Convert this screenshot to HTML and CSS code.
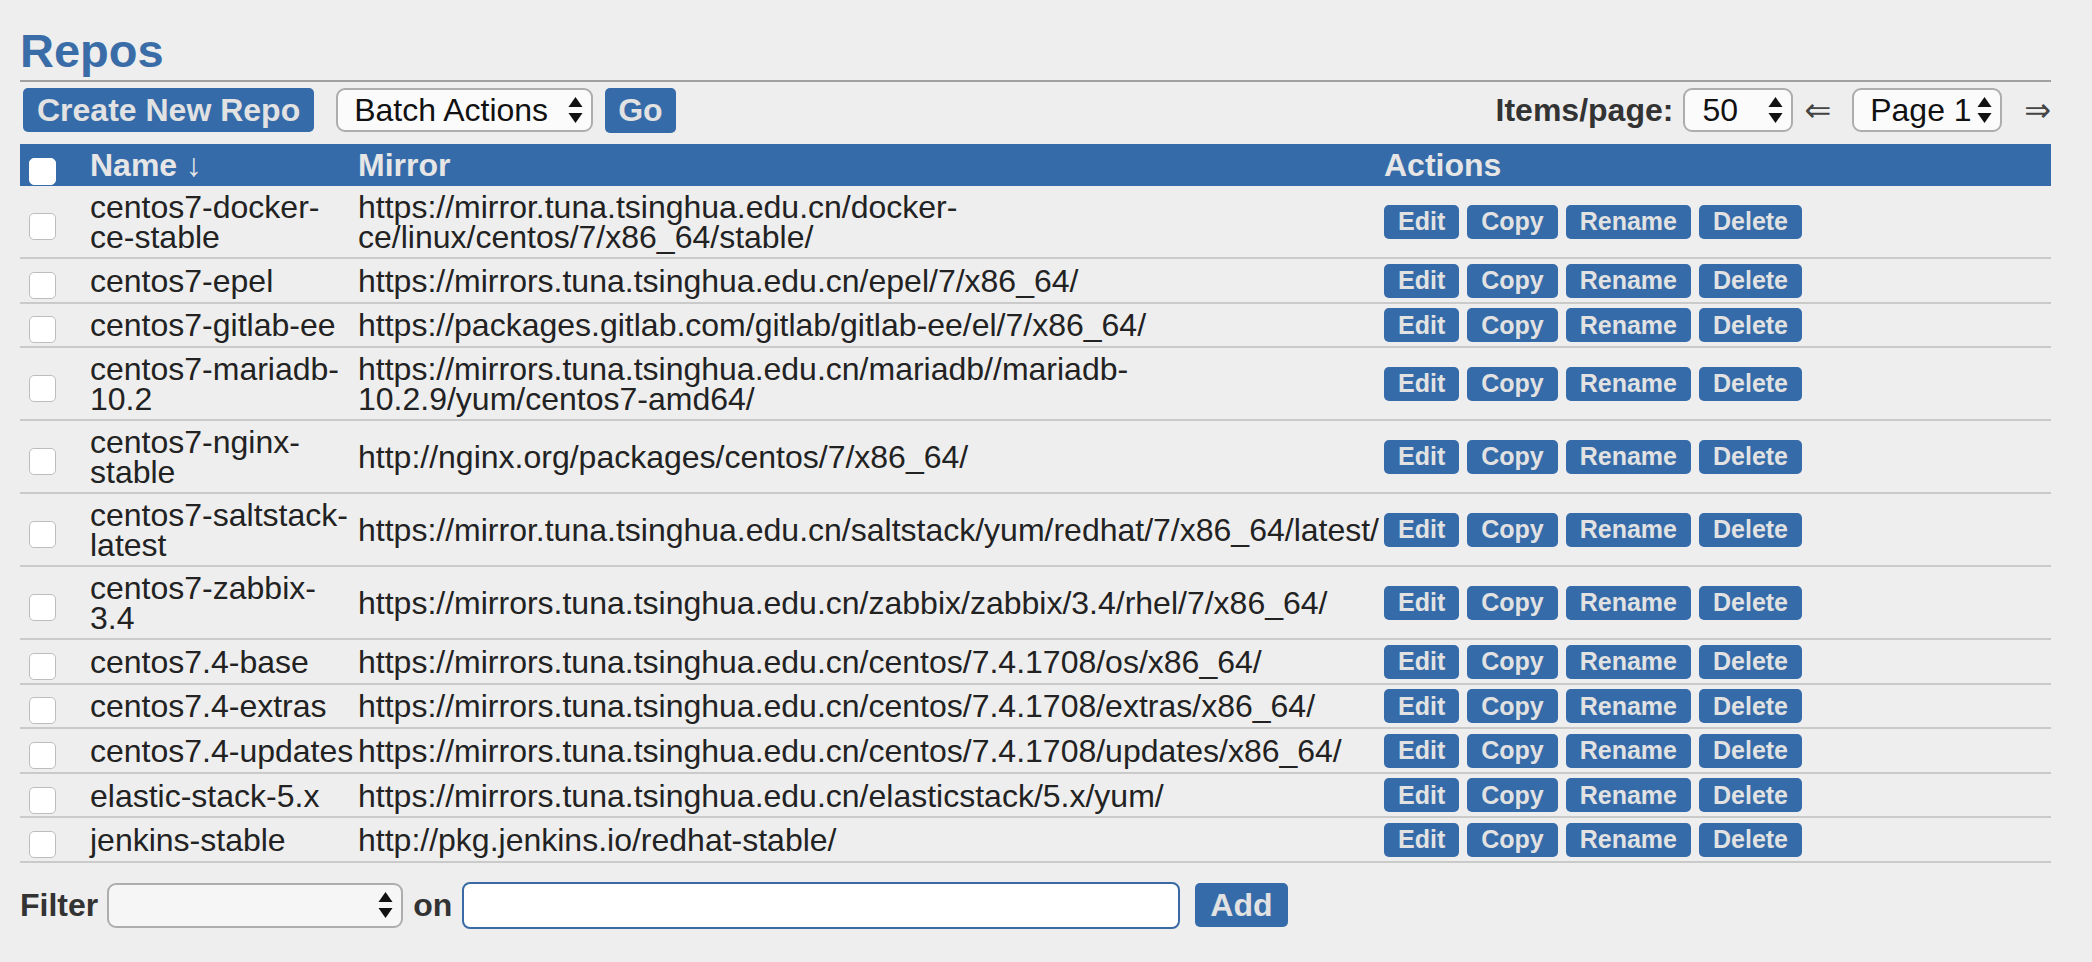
FILE: index.html
```html
<!DOCTYPE html>
<html>
<head>
<meta charset="utf-8">
<title>Repos</title>
<link rel="stylesheet" href="styles.css">
</head>
<body>
<div class="page">
  <h1 class="title">Repos</h1>
  <div class="rule"></div>
  <div class="toolbar">
    <div class="group">
      <button class="btn btn-lg">Create New Repo</button>
      <span class="select sel-batch"><span class="sel-text">Batch Actions</span><svg class="updown" viewBox="0 0 14 26"><polygon points="0,10 7,0 14,10"/><polygon points="0,16 14,16 7,26"/></svg></span>
      <button class="btn btn-lg btn-go">Go</button>
    </div>
    <div class="group">
      <span class="label">Items/page:</span>
      <span class="select sel-items"><span class="sel-text">50</span><svg class="updown" viewBox="0 0 14 26"><polygon points="0,10 7,0 14,10"/><polygon points="0,16 14,16 7,26"/></svg></span>
      <span class="arrow arrow-left">&#8656;</span>
      <span class="select sel-page"><span class="sel-text">Page 1</span><svg class="updown" viewBox="0 0 14 26"><polygon points="0,10 7,0 14,10"/><polygon points="0,16 14,16 7,26"/></svg></span>
      <span class="arrow arrow-right">&#8658;</span>
    </div>
  </div>
  <table class="repos">
    <colgroup>
      <col class="c-check">
      <col class="c-name">
      <col class="c-mirror">
      <col>
    </colgroup>
    <thead>
      <tr><th class="check"><span class="cb cb-head"></span></th><th>Name <span class="sort">&#8595;</span></th><th>Mirror</th><th>Actions</th></tr>
    </thead>
    <tbody>
      <tr><td class="check"><span class="cb"></span></td><td>centos7-docker-ce-stable</td><td>https://mirror.tuna.tsinghua.edu.cn/docker-ce/linux/centos/7/x86_64/stable/</td><td class="acts"><button class="btn btn-sm">Edit</button><button class="btn btn-sm">Copy</button><button class="btn btn-sm">Rename</button><button class="btn btn-sm">Delete</button></td></tr>
      <tr><td class="check"><span class="cb"></span></td><td>centos7-epel</td><td>https://mirrors.tuna.tsinghua.edu.cn/epel/7/x86_64/</td><td class="acts"><button class="btn btn-sm">Edit</button><button class="btn btn-sm">Copy</button><button class="btn btn-sm">Rename</button><button class="btn btn-sm">Delete</button></td></tr>
      <tr><td class="check"><span class="cb"></span></td><td>centos7-gitlab-ee</td><td>https://packages.gitlab.com/gitlab/gitlab-ee/el/7/x86_64/</td><td class="acts"><button class="btn btn-sm">Edit</button><button class="btn btn-sm">Copy</button><button class="btn btn-sm">Rename</button><button class="btn btn-sm">Delete</button></td></tr>
      <tr><td class="check"><span class="cb"></span></td><td>centos7-mariadb-10.2</td><td>https://mirrors.tuna.tsinghua.edu.cn/mariadb//mariadb-10.2.9/yum/centos7-amd64/</td><td class="acts"><button class="btn btn-sm">Edit</button><button class="btn btn-sm">Copy</button><button class="btn btn-sm">Rename</button><button class="btn btn-sm">Delete</button></td></tr>
      <tr><td class="check"><span class="cb"></span></td><td>centos7-nginx-stable</td><td>http://nginx.org/packages/centos/7/x86_64/</td><td class="acts"><button class="btn btn-sm">Edit</button><button class="btn btn-sm">Copy</button><button class="btn btn-sm">Rename</button><button class="btn btn-sm">Delete</button></td></tr>
      <tr><td class="check"><span class="cb"></span></td><td>centos7-saltstack-latest</td><td>https://mirror.tuna.tsinghua.edu.cn/saltstack/yum/redhat/7/x86_64/latest/</td><td class="acts"><button class="btn btn-sm">Edit</button><button class="btn btn-sm">Copy</button><button class="btn btn-sm">Rename</button><button class="btn btn-sm">Delete</button></td></tr>
      <tr><td class="check"><span class="cb"></span></td><td>centos7-zabbix-3.4</td><td>https://mirrors.tuna.tsinghua.edu.cn/zabbix/zabbix/3.4/rhel/7/x86_64/</td><td class="acts"><button class="btn btn-sm">Edit</button><button class="btn btn-sm">Copy</button><button class="btn btn-sm">Rename</button><button class="btn btn-sm">Delete</button></td></tr>
      <tr><td class="check"><span class="cb"></span></td><td>centos7.4-base</td><td>https://mirrors.tuna.tsinghua.edu.cn/centos/7.4.1708/os/x86_64/</td><td class="acts"><button class="btn btn-sm">Edit</button><button class="btn btn-sm">Copy</button><button class="btn btn-sm">Rename</button><button class="btn btn-sm">Delete</button></td></tr>
      <tr><td class="check"><span class="cb"></span></td><td>centos7.4-extras</td><td>https://mirrors.tuna.tsinghua.edu.cn/centos/7.4.1708/extras/x86_64/</td><td class="acts"><button class="btn btn-sm">Edit</button><button class="btn btn-sm">Copy</button><button class="btn btn-sm">Rename</button><button class="btn btn-sm">Delete</button></td></tr>
      <tr><td class="check"><span class="cb"></span></td><td>centos7.4-updates</td><td>https://mirrors.tuna.tsinghua.edu.cn/centos/7.4.1708/updates/x86_64/</td><td class="acts"><button class="btn btn-sm">Edit</button><button class="btn btn-sm">Copy</button><button class="btn btn-sm">Rename</button><button class="btn btn-sm">Delete</button></td></tr>
      <tr><td class="check"><span class="cb"></span></td><td>elastic-stack-5.x</td><td>https://mirrors.tuna.tsinghua.edu.cn/elasticstack/5.x/yum/</td><td class="acts"><button class="btn btn-sm">Edit</button><button class="btn btn-sm">Copy</button><button class="btn btn-sm">Rename</button><button class="btn btn-sm">Delete</button></td></tr>
      <tr><td class="check"><span class="cb"></span></td><td>jenkins-stable</td><td>http://pkg.jenkins.io/redhat-stable/</td><td class="acts"><button class="btn btn-sm">Edit</button><button class="btn btn-sm">Copy</button><button class="btn btn-sm">Rename</button><button class="btn btn-sm">Delete</button></td></tr>
    </tbody>
  </table>
  <div class="filter">
    <span class="label">Filter</span>
    <span class="select sel-filter"><span class="sel-text"></span><svg class="updown" viewBox="0 0 14 26"><polygon points="0,10 7,0 14,10"/><polygon points="0,16 14,16 7,26"/></svg></span>
    <span class="label">on</span>
    <input class="text-input" type="text">
    <button class="btn btn-lg btn-add">Add</button>
  </div>
</div>
</body>
</html>
```

FILE: styles.css
```css
html, body {
  margin: 0;
  padding: 0;
  background: #eeeeee;
}
body {
  font-family: "Liberation Sans", "DejaVu Sans", Arial, sans-serif;
  color: #222222;
}
.page {
  padding: 24px 41px 0 20px;
}
.title {
  margin: 0;
  font-size: 47px;
  font-weight: bold;
  color: #3a6da8;
  line-height: 53px;
}
.rule {
  margin-top: 3px;
  border-top: 2px solid #a0a0a0;
}
.toolbar {
  display: flex;
  justify-content: space-between;
  align-items: center;
  height: 46px;
  margin-top: 5px;
  margin-bottom: 11px;
}
.group {
  display: flex;
  align-items: center;
}
.btn {
  font-family: "Liberation Sans", "DejaVu Sans", Arial, sans-serif;
  font-weight: bold;
  background: #356ba9;
  color: #e2e2e2;
  border: none;
  border-radius: 5px;
  padding: 0;
  cursor: pointer;
}
.btn-lg {
  font-size: 32px;
  height: 44px;
  padding: 0 14px;
  margin-left: 3px;
}
.btn-go {
  margin-left: 12px;
  padding: 0 13px;
  height: 45px;
}
.btn-add {
  margin-left: 15px;
  padding: 0 15px;
}
.select {
  display: inline-flex;
  align-items: center;
  justify-content: space-between;
  box-sizing: border-box;
  height: 44px;
  border: 2px solid #adadad;
  border-radius: 9px;
  background: #fbfbfb;
  font-size: 32px;
  color: #111;
  padding: 0 8px 0 16px;
}
.sel-batch {
  width: 257px;
  margin-left: 22px;
}
.sel-items {
  width: 110px;
  margin-left: 10px;
  padding-left: 17px;
}
.sel-page {
  width: 150px;
  margin-left: 21px;
  padding-left: 16px;
}
.sel-filter {
  width: 296px;
  height: 45px;
  margin-left: 9px;
  margin-right: 10px;
  background: #f6f6f6;
}
.updown {
  width: 15px;
  height: 26px;
  fill: #111;
  flex: none;
}
.label {
  font-size: 32px;
  font-weight: bold;
  color: #333;
}
.arrow {
  font-size: 32px;
  color: #444;
  line-height: 1;
}
.arrow-left {
  margin-left: 11px;
}
.arrow-right {
  margin-left: 22px;
}
.repos {
  width: 100%;
  table-layout: fixed;
  border-collapse: collapse;
  font-size: 32px;
  line-height: 30px;
}
.c-check { width: 69px; }
.c-name { width: 268px; }
.c-mirror { width: 1026px; }
.repos thead tr {
  background: #356ba9;
}
.repos th {
  text-align: left;
  font-weight: bold;
  color: #e6e6e6;
  padding: 6px 1px 6px 1px;
  vertical-align: middle;
}
.repos td {
  padding: 6px 1px 5px 1px;
  vertical-align: middle;
  border-bottom: 2px solid #cacaca;
}
.repos th.check {
  padding-top: 12px;
  padding-bottom: 0;
}
.repos td.check {
  padding-top: 10px;
  padding-bottom: 0;
}
.repos td.acts {
  padding-top: 4px;
  padding-bottom: 4px;
  white-space: nowrap;
}
.sort {
  font-weight: normal;
}
.cb {
  display: block;
  box-sizing: border-box;
  width: 27px;
  height: 27px;
  margin-left: 8px;
  border: 1px solid #bdbdbd;
  border-radius: 5px;
  background: #ffffff;
}
.cb-head {
  border-color: #ffffff;
}
.btn-sm {
  font-size: 25px;
  height: 34px;
  padding: 0 14px;
  margin-right: 8px;
  vertical-align: middle;
}
.filter {
  display: flex;
  align-items: center;
  margin-top: 19px;
  height: 47px;
}
.text-input {
  box-sizing: border-box;
  width: 718px;
  height: 47px;
  margin-left: 10px;
  border: 2px solid #3a6aa3;
  border-radius: 8px;
  background: #ffffff;
  font-size: 32px;
  outline: none;
}
```
